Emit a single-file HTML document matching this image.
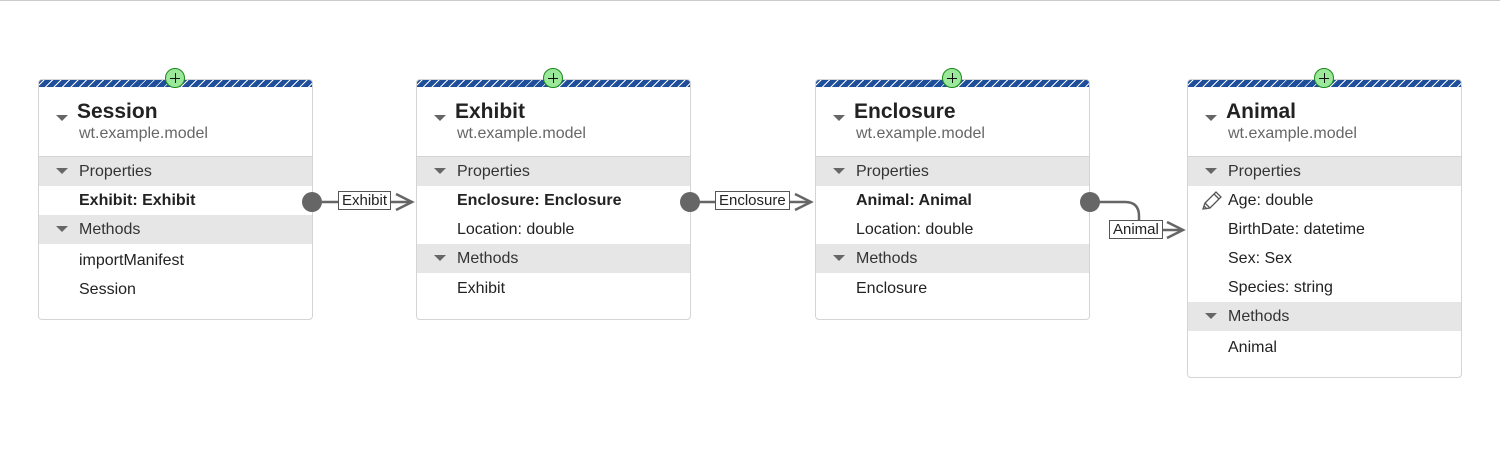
<!DOCTYPE html>
<html><head><style>
body{margin:0;width:1500px;height:450px;background:#fff;font-family:"Liberation Sans",Arial,sans-serif;position:relative;overflow:hidden;border-top:1px solid #ccc;box-sizing:border-box}
.card{position:absolute;top:78px;width:275px;border:1px solid #d4d4d4;border-radius:4px;background:#fff;box-sizing:border-box}
.stripe{height:7px;border-radius:3px 3px 0 0;background:repeating-linear-gradient(135deg,#1f4f9a 0 3px,#fff 3px 4px,#1f4f9a 4px 6px);background-color:#1f4f9a}
.plus{position:absolute;top:-12px;left:126px;width:20px;height:20px;border-radius:50%;background:#9be89b;border:1px solid #1a8a1a;box-sizing:border-box}
.plus:before{content:"";position:absolute;left:4px;right:4px;top:8.5px;height:1.3px;background:#111}
.plus:after{content:"";position:absolute;top:4px;bottom:4px;left:8.5px;width:1.3px;background:#111}
.head{height:69px;position:relative;border-bottom:1px solid #d4d4d4}
.title{position:absolute;left:38px;top:13px;font-size:21px;font-weight:bold;color:#222}
.sub{position:absolute;left:40px;top:38px;font-size:16px;color:#666}
.tri{position:absolute;width:0;height:0;border-left:6px solid transparent;border-right:6px solid transparent;border-top:6px solid #666}
.band{height:29px;background:#e6e6e6;position:relative;font-size:16px;color:#333;line-height:29px;padding-left:40px}
.band .tri{left:17px;top:11px}
.row{height:29px;line-height:29px;font-size:16px;color:#222;padding-left:40px;position:relative}
.b{font-weight:bold}
.lbl{position:absolute;background:#fff;border:1px solid #555;font-size:15px;line-height:17px;padding:0 3px;color:#222;z-index:3}
svg.c{z-index:2}
</style></head><body>

<div class="card" style="left:38px;height:241px"><div class="stripe"></div><div class="plus"></div>
<div class="head"><div class="tri" style="left:17px;top:28px"></div><div class="title">Session</div><div class="sub">wt.example.model</div></div>
<div class="band"><div class="tri"></div>Properties</div>
<div class="row b">Exhibit: Exhibit</div>
<div class="band"><div class="tri"></div>Methods</div>
<div class="row" style="margin-top:2px">importManifest</div><div class="row">Session</div></div>

<div class="card" style="left:416px;height:241px"><div class="stripe"></div><div class="plus"></div>
<div class="head"><div class="tri" style="left:17px;top:28px"></div><div class="title">Exhibit</div><div class="sub">wt.example.model</div></div>
<div class="band"><div class="tri"></div>Properties</div>
<div class="row b">Enclosure: Enclosure</div><div class="row">Location: double</div>
<div class="band"><div class="tri"></div>Methods</div>
<div class="row" style="margin-top:1px">Exhibit</div></div>

<div class="card" style="left:815px;height:241px"><div class="stripe"></div><div class="plus"></div>
<div class="head"><div class="tri" style="left:17px;top:28px"></div><div class="title">Enclosure</div><div class="sub">wt.example.model</div></div>
<div class="band"><div class="tri"></div>Properties</div>
<div class="row b">Animal: Animal</div><div class="row">Location: double</div>
<div class="band"><div class="tri"></div>Methods</div>
<div class="row" style="margin-top:1px">Enclosure</div></div>

<div class="card" style="left:1187px;height:299px"><div class="stripe"></div><div class="plus"></div>
<div class="head"><div class="tri" style="left:17px;top:28px"></div><div class="title">Animal</div><div class="sub">wt.example.model</div></div>
<div class="band"><div class="tri"></div>Properties</div>
<div class="row"><svg style="position:absolute;left:13px;top:5px" width="22" height="20" viewBox="0 0 22 20"><g fill="none" stroke="#555" stroke-width="1.3"><path d="M2 18 L4 12 L15 1 L20 6 L9 17 Z"/><path d="M4 12 L9 17 M13 3 L18 8 M3 15 L6 18"/></g></svg>Age: double</div>
<div class="row">BirthDate: datetime</div><div class="row">Sex: Sex</div><div class="row">Species: string</div>
<div class="band"><div class="tri"></div>Methods</div>
<div class="row" style="margin-top:2px">Animal</div></div>

<svg class="c" style="position:absolute;left:0;top:0" width="1500" height="450">
<g stroke="#666" stroke-width="2.5" fill="none">
<line x1="313" y1="201" x2="412" y2="201"/><polyline points="396,193 412,201 396,209"/>
<line x1="691" y1="201" x2="811" y2="201"/><polyline points="795,193 811,201 795,209"/>
<path d="M1091 201 H1125 Q1139 201 1139 215 V229 H1183"/><polyline points="1167,221 1183,229 1167,237"/>
</g>
<g fill="#666"><circle cx="312" cy="201" r="10"/><circle cx="690" cy="201" r="10"/><circle cx="1090" cy="201" r="10"/></g>
</svg>
<div class="lbl" style="left:338px;top:190px">Exhibit</div>
<div class="lbl" style="left:715px;top:190px">Enclosure</div>
<div class="lbl" style="left:1109px;top:219px">Animal</div>
</body></html>
